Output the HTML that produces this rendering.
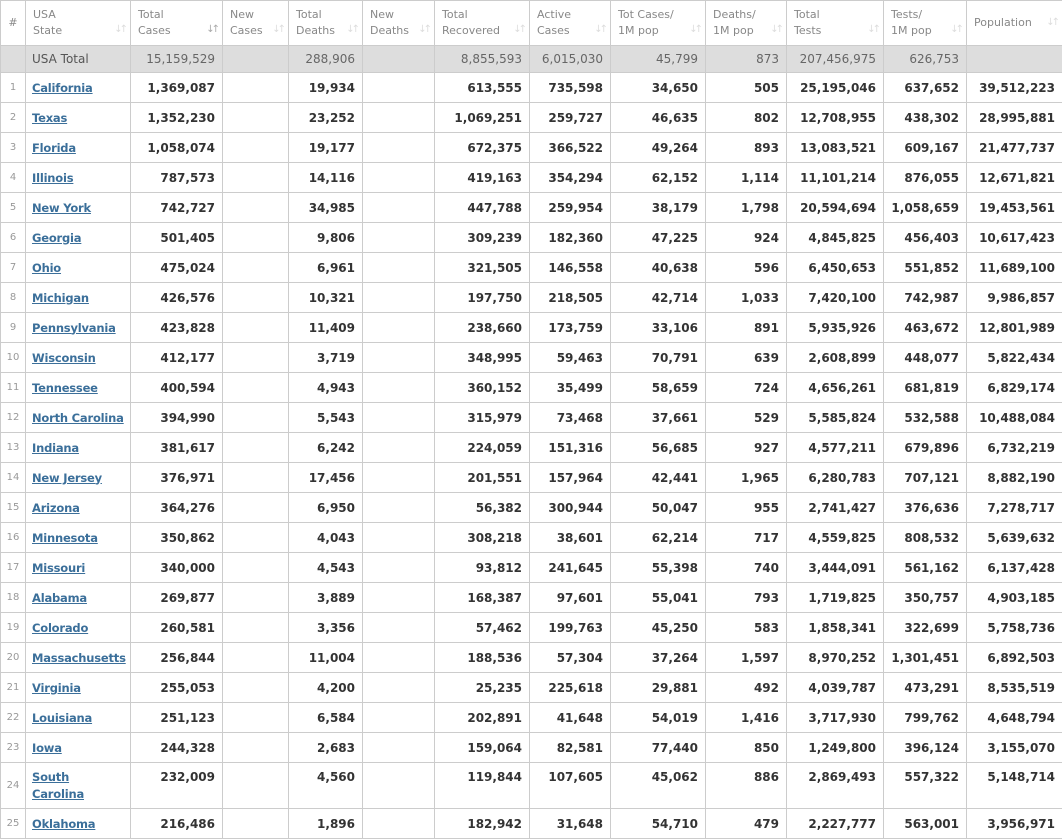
<!DOCTYPE html>
<html><head><meta charset="utf-8"><style>
html,body{margin:0;padding:0;background:#fff;width:1062px;height:839px;overflow:hidden}
table{border-collapse:collapse;table-layout:fixed;width:1062px;font-family:"DejaVu Sans","Liberation Sans",sans-serif;}
td,th{border:1px solid #ccc;padding:0 7px 0 6px;white-space:nowrap;overflow:hidden}
th{height:44px;font-size:11px;font-weight:normal;color:#888;text-align:left;vertical-align:middle;line-height:16px;position:relative;padding-left:7px}
th .s{position:absolute;right:5px;bottom:7px;color:#ddd;font-size:10px;letter-spacing:-3px}
th .s.a{color:#aaa}
td{font-size:12px;font-weight:bold;color:#333;text-align:right;height:29px}
td.r{font-size:10px;font-weight:normal;color:#999;text-align:center;padding:0}
td.n{text-align:left;font-size:11.5px;letter-spacing:-0.2px}
td.n a{color:#3b6f9a;text-decoration:underline}
tr.t td{background:#ddd;font-weight:normal;color:#666;height:26px}
tr.t td.n{color:#555;font-size:12px;letter-spacing:0}
tr.tall td{height:39px;vertical-align:top;padding-top:6px;line-height:17px}
tr.tall td.r{vertical-align:middle;padding-top:0}
tr.tall td.n{white-space:normal}
</style></head><body>
<table>
<colgroup><col style="width:25px"><col style="width:105px"><col style="width:92px"><col style="width:66px"><col style="width:74px"><col style="width:72px"><col style="width:95px"><col style="width:81px"><col style="width:95px"><col style="width:81px"><col style="width:97px"><col style="width:83px"><col style="width:96px"></colgroup>
<tr><th style="text-align:center;padding:0">#</th><th>USA<br>State<span class="s">↓↑</span></th><th>Total<br>Cases<span class="s a">↓↑</span></th><th>New<br>Cases<span class="s">↓↑</span></th><th>Total<br>Deaths<span class="s">↓↑</span></th><th>New<br>Deaths<span class="s">↓↑</span></th><th>Total<br>Recovered<span class="s">↓↑</span></th><th>Active<br>Cases<span class="s">↓↑</span></th><th>Tot Cases/<br>1M pop<span class="s">↓↑</span></th><th>Deaths/<br>1M pop<span class="s">↓↑</span></th><th>Total<br>Tests<span class="s">↓↑</span></th><th>Tests/<br>1M pop<span class="s">↓↑</span></th><th>Population<span class="s" style="bottom:14px">↓↑</span></th></tr>
<tr class="t"><td class="r"></td><td class="n">USA Total</td><td>15,159,529</td><td></td><td>288,906</td><td></td><td>8,855,593</td><td>6,015,030</td><td>45,799</td><td>873</td><td>207,456,975</td><td>626,753</td><td></td></tr>
<tr><td class="r">1</td><td class="n"><a>California</a></td><td>1,369,087</td><td></td><td>19,934</td><td></td><td>613,555</td><td>735,598</td><td>34,650</td><td>505</td><td>25,195,046</td><td>637,652</td><td>39,512,223</td></tr>
<tr><td class="r">2</td><td class="n"><a>Texas</a></td><td>1,352,230</td><td></td><td>23,252</td><td></td><td>1,069,251</td><td>259,727</td><td>46,635</td><td>802</td><td>12,708,955</td><td>438,302</td><td>28,995,881</td></tr>
<tr><td class="r">3</td><td class="n"><a>Florida</a></td><td>1,058,074</td><td></td><td>19,177</td><td></td><td>672,375</td><td>366,522</td><td>49,264</td><td>893</td><td>13,083,521</td><td>609,167</td><td>21,477,737</td></tr>
<tr><td class="r">4</td><td class="n"><a>Illinois</a></td><td>787,573</td><td></td><td>14,116</td><td></td><td>419,163</td><td>354,294</td><td>62,152</td><td>1,114</td><td>11,101,214</td><td>876,055</td><td>12,671,821</td></tr>
<tr><td class="r">5</td><td class="n"><a>New York</a></td><td>742,727</td><td></td><td>34,985</td><td></td><td>447,788</td><td>259,954</td><td>38,179</td><td>1,798</td><td>20,594,694</td><td>1,058,659</td><td>19,453,561</td></tr>
<tr><td class="r">6</td><td class="n"><a>Georgia</a></td><td>501,405</td><td></td><td>9,806</td><td></td><td>309,239</td><td>182,360</td><td>47,225</td><td>924</td><td>4,845,825</td><td>456,403</td><td>10,617,423</td></tr>
<tr><td class="r">7</td><td class="n"><a>Ohio</a></td><td>475,024</td><td></td><td>6,961</td><td></td><td>321,505</td><td>146,558</td><td>40,638</td><td>596</td><td>6,450,653</td><td>551,852</td><td>11,689,100</td></tr>
<tr><td class="r">8</td><td class="n"><a>Michigan</a></td><td>426,576</td><td></td><td>10,321</td><td></td><td>197,750</td><td>218,505</td><td>42,714</td><td>1,033</td><td>7,420,100</td><td>742,987</td><td>9,986,857</td></tr>
<tr><td class="r">9</td><td class="n"><a>Pennsylvania</a></td><td>423,828</td><td></td><td>11,409</td><td></td><td>238,660</td><td>173,759</td><td>33,106</td><td>891</td><td>5,935,926</td><td>463,672</td><td>12,801,989</td></tr>
<tr><td class="r">10</td><td class="n"><a>Wisconsin</a></td><td>412,177</td><td></td><td>3,719</td><td></td><td>348,995</td><td>59,463</td><td>70,791</td><td>639</td><td>2,608,899</td><td>448,077</td><td>5,822,434</td></tr>
<tr><td class="r">11</td><td class="n"><a>Tennessee</a></td><td>400,594</td><td></td><td>4,943</td><td></td><td>360,152</td><td>35,499</td><td>58,659</td><td>724</td><td>4,656,261</td><td>681,819</td><td>6,829,174</td></tr>
<tr><td class="r">12</td><td class="n"><a>North Carolina</a></td><td>394,990</td><td></td><td>5,543</td><td></td><td>315,979</td><td>73,468</td><td>37,661</td><td>529</td><td>5,585,824</td><td>532,588</td><td>10,488,084</td></tr>
<tr><td class="r">13</td><td class="n"><a>Indiana</a></td><td>381,617</td><td></td><td>6,242</td><td></td><td>224,059</td><td>151,316</td><td>56,685</td><td>927</td><td>4,577,211</td><td>679,896</td><td>6,732,219</td></tr>
<tr><td class="r">14</td><td class="n"><a>New Jersey</a></td><td>376,971</td><td></td><td>17,456</td><td></td><td>201,551</td><td>157,964</td><td>42,441</td><td>1,965</td><td>6,280,783</td><td>707,121</td><td>8,882,190</td></tr>
<tr><td class="r">15</td><td class="n"><a>Arizona</a></td><td>364,276</td><td></td><td>6,950</td><td></td><td>56,382</td><td>300,944</td><td>50,047</td><td>955</td><td>2,741,427</td><td>376,636</td><td>7,278,717</td></tr>
<tr><td class="r">16</td><td class="n"><a>Minnesota</a></td><td>350,862</td><td></td><td>4,043</td><td></td><td>308,218</td><td>38,601</td><td>62,214</td><td>717</td><td>4,559,825</td><td>808,532</td><td>5,639,632</td></tr>
<tr><td class="r">17</td><td class="n"><a>Missouri</a></td><td>340,000</td><td></td><td>4,543</td><td></td><td>93,812</td><td>241,645</td><td>55,398</td><td>740</td><td>3,444,091</td><td>561,162</td><td>6,137,428</td></tr>
<tr><td class="r">18</td><td class="n"><a>Alabama</a></td><td>269,877</td><td></td><td>3,889</td><td></td><td>168,387</td><td>97,601</td><td>55,041</td><td>793</td><td>1,719,825</td><td>350,757</td><td>4,903,185</td></tr>
<tr><td class="r">19</td><td class="n"><a>Colorado</a></td><td>260,581</td><td></td><td>3,356</td><td></td><td>57,462</td><td>199,763</td><td>45,250</td><td>583</td><td>1,858,341</td><td>322,699</td><td>5,758,736</td></tr>
<tr><td class="r">20</td><td class="n"><a>Massachusetts</a></td><td>256,844</td><td></td><td>11,004</td><td></td><td>188,536</td><td>57,304</td><td>37,264</td><td>1,597</td><td>8,970,252</td><td>1,301,451</td><td>6,892,503</td></tr>
<tr><td class="r">21</td><td class="n"><a>Virginia</a></td><td>255,053</td><td></td><td>4,200</td><td></td><td>25,235</td><td>225,618</td><td>29,881</td><td>492</td><td>4,039,787</td><td>473,291</td><td>8,535,519</td></tr>
<tr><td class="r">22</td><td class="n"><a>Louisiana</a></td><td>251,123</td><td></td><td>6,584</td><td></td><td>202,891</td><td>41,648</td><td>54,019</td><td>1,416</td><td>3,717,930</td><td>799,762</td><td>4,648,794</td></tr>
<tr><td class="r">23</td><td class="n"><a>Iowa</a></td><td>244,328</td><td></td><td>2,683</td><td></td><td>159,064</td><td>82,581</td><td>77,440</td><td>850</td><td>1,249,800</td><td>396,124</td><td>3,155,070</td></tr>
<tr class="tall"><td class="r">24</td><td class="n"><a>South<br>Carolina</a></td><td>232,009</td><td></td><td>4,560</td><td></td><td>119,844</td><td>107,605</td><td>45,062</td><td>886</td><td>2,869,493</td><td>557,322</td><td>5,148,714</td></tr>
<tr><td class="r">25</td><td class="n"><a>Oklahoma</a></td><td>216,486</td><td></td><td>1,896</td><td></td><td>182,942</td><td>31,648</td><td>54,710</td><td>479</td><td>2,227,777</td><td>563,001</td><td>3,956,971</td></tr>
</table>
</body></html>
